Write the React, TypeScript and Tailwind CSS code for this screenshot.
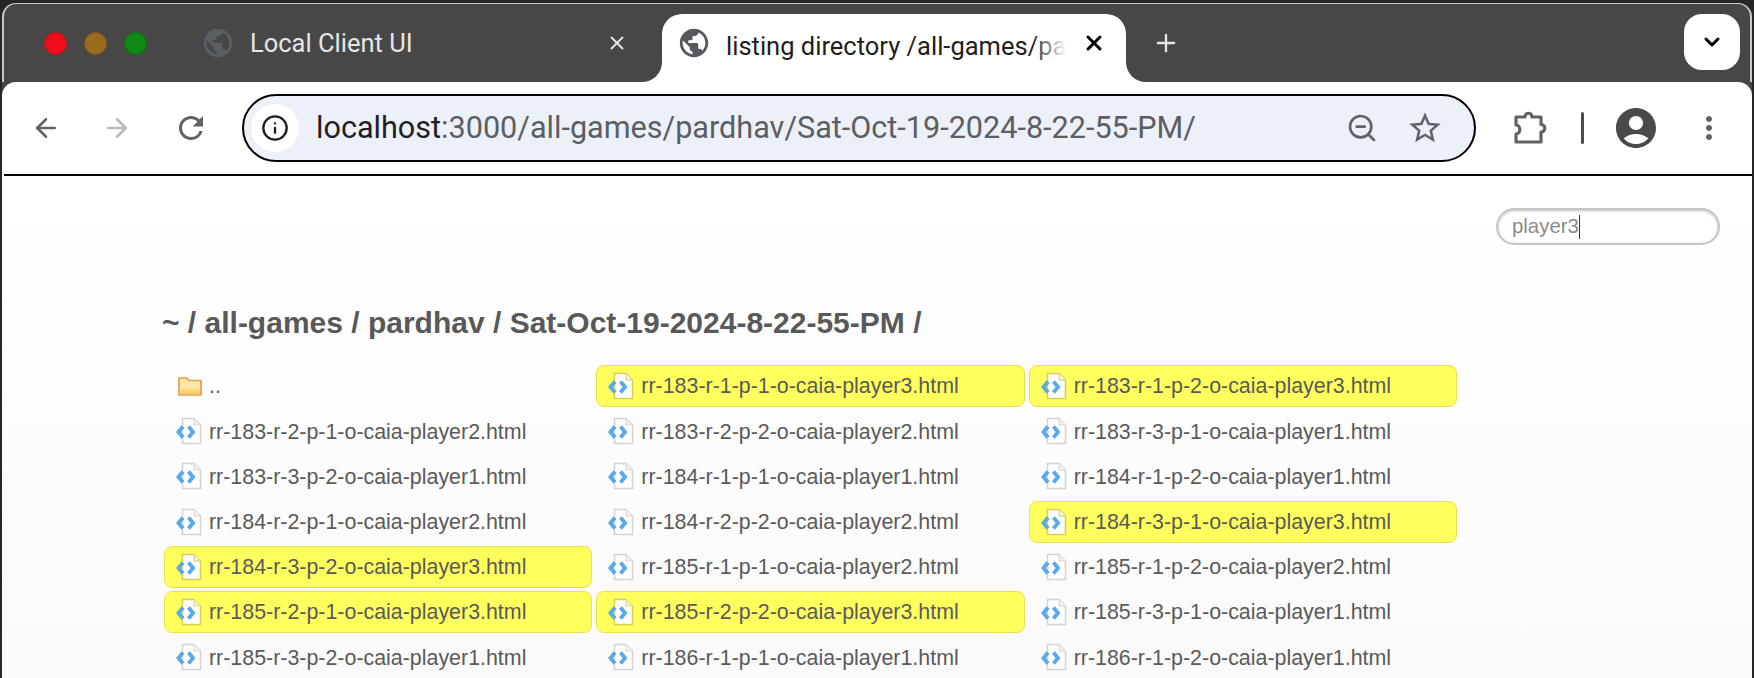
import React from "react";
import { ArrowLeft, ArrowRight, Info, ZoomOut, X, Plus, ChevronDown } from "lucide-react";
import { MdPublic, MdAccountCircle, MdMoreVert, MdRefresh, MdStarBorder } from "react-icons/md";

const files: [string, boolean][] = [
  ["..", false],
  ["rr-183-r-1-p-1-o-caia-player3.html", true],
  ["rr-183-r-1-p-2-o-caia-player3.html", true],
  ["rr-183-r-2-p-1-o-caia-player2.html", false],
  ["rr-183-r-2-p-2-o-caia-player2.html", false],
  ["rr-183-r-3-p-1-o-caia-player1.html", false],
  ["rr-183-r-3-p-2-o-caia-player1.html", false],
  ["rr-184-r-1-p-1-o-caia-player1.html", false],
  ["rr-184-r-1-p-2-o-caia-player1.html", false],
  ["rr-184-r-2-p-1-o-caia-player2.html", false],
  ["rr-184-r-2-p-2-o-caia-player2.html", false],
  ["rr-184-r-3-p-1-o-caia-player3.html", true],
  ["rr-184-r-3-p-2-o-caia-player3.html", true],
  ["rr-185-r-1-p-1-o-caia-player2.html", false],
  ["rr-185-r-1-p-2-o-caia-player2.html", false],
  ["rr-185-r-2-p-1-o-caia-player3.html", true],
  ["rr-185-r-2-p-2-o-caia-player3.html", true],
  ["rr-185-r-3-p-1-o-caia-player1.html", false],
  ["rr-185-r-3-p-2-o-caia-player1.html", false],
  ["rr-186-r-1-p-1-o-caia-player1.html", false],
  ["rr-186-r-1-p-2-o-caia-player1.html", false],
];

function FileIcon({ hit }: { hit: boolean }) {
  const edge = hit ? "#d8cf5a" : "#d4d4d4";
  return (
    <svg width="28" height="28" viewBox="0 0 28 28" className="shrink-0">
      <path d="M6.5 1.5H18L24.5 8V26.5H6.5Z" fill="#ffffff" stroke={edge} strokeWidth="1.6" />
      <path d="M18 1.5V8H24.5" fill="#f1f1f1" stroke={edge} strokeWidth="1" />
      <path d="M7 9.5L2.5 15L7 20.5" fill="none" stroke="#58a9ea" strokeWidth="3.8" />
      <path d="M12.5 9.5L17 15L12.5 20.5" fill="none" stroke="#58a9ea" strokeWidth="3.8" />
    </svg>
  );
}

function FolderIcon() {
  return (
    <svg width="28" height="28" viewBox="0 0 28 28" className="shrink-0">
      <defs>
        <linearGradient id="fold" x1="0" y1="0" x2="0" y2="1">
          <stop offset="0" stopColor="#fdeeb8" />
          <stop offset="1" stopColor="#f5c75a" />
        </linearGradient>
      </defs>
      <path d="M3 6H11L13 8.5H25V23H3Z" fill="#fbe6a6" stroke="#e3a050" strokeWidth="1.7" />
      <path d="M4.5 14H24V22H4.5Z" fill="url(#fold)" />
    </svg>
  );
}

function PuzzleIcon() {
  return (
    <svg width="38" height="38" viewBox="0 0 38 38" className="text-[#5f6368] ml-[34px] shrink-0" fill="none" stroke="currentColor" strokeWidth="3.2" strokeLinejoin="round">
      <path d="M6 8H15C15 3 22 3 22 8H31V15.5C36 15.5 36 23 31 23V33H6V25C11 25 11 16 6 16Z" />
    </svg>
  );
}

export default function App() {
  return (
    <div className="w-[1754px] h-[678px] overflow-hidden bg-[#262626] pt-[3px] px-[2px]" style={{ fontFamily: "Roboto, sans-serif" }}>
      <div className="h-full rounded-t-[14px] flex flex-col bg-[#474747]">
        {/* tab strip */}
        <div className="h-[79px] shrink-0 flex pt-[10px] relative border-t-[1px] border-x-[2px] border-[#c9c9c9] rounded-t-[14px]">
          <div className="flex items-center gap-[17px] pl-[40px] w-[192px] h-[58px]">
            <span className="w-[23px] h-[23px] rounded-full bg-[#f00d1b] border border-[#c3101b]" />
            <span className="w-[23px] h-[23px] rounded-full bg-[#9c6b1d] border border-[#7d5414]" />
            <span className="w-[23px] h-[23px] rounded-full bg-[#0d8a15] border border-[#0a6d10]" />
          </div>
          <div className="w-[466px] h-[58px] flex items-center text-[#e6e6e6] text-[25.5px]">
            <MdPublic size={34} className="text-[#5a5e66] ml-[5px] shrink-0" />
            <span className="ml-[15px] flex-1">Local Client UI</span>
            <X size={22} strokeWidth={2} className="mr-[34px] text-[#e8e8e8]" />
          </div>
          <div className="w-[464px] h-[68px] bg-white rounded-t-[20px] relative flex items-start pt-[12px] text-[#1f1f1f] text-[25.5px]">
            <div className="absolute left-[-20px] bottom-0 w-5 h-5 bg-white">
              <div className="w-full h-full bg-[#474747] rounded-br-[20px]" />
            </div>
            <div className="absolute right-[-20px] bottom-0 w-5 h-5 bg-white">
              <div className="w-full h-full bg-[#474747] rounded-bl-[20px]" />
            </div>
            <MdPublic size={34} className="text-[#55585e] ml-[15px] shrink-0" />
            <span className="ml-[15px] w-[340px] relative whitespace-nowrap pt-[1px]">
              listing directory /all-games/pa
              <span className="absolute right-0 top-0 bottom-0 w-[34px] bg-gradient-to-r from-transparent to-white" />
            </span>
            <X size={24} strokeWidth={3} className="ml-[16px] mt-[5px] text-black shrink-0" />
          </div>
          <div className="h-[58px] flex items-center ml-[26px]">
            <Plus size={28} strokeWidth={2} className="text-[#e6e6e6]" />
          </div>
          <div className="flex-1 flex justify-end pr-[10px]">
            <div className="w-[56px] h-[56px] bg-white rounded-[18px] flex items-center justify-center">
              <ChevronDown size={24} strokeWidth={3} className="text-black" />
            </div>
          </div>
        </div>
        {/* toolbar */}
        <div className="shrink-0 bg-white rounded-t-[14px] relative z-10">
          <div className="h-[92px] flex items-center">
            <ArrowLeft size={30} strokeWidth={2} className="text-[#5f6368] ml-[29px]" />
            <ArrowRight size={30} strokeWidth={2} className="text-[#b9babc] ml-[41px]" />
            <MdRefresh size={36} className="text-[#5f6368] ml-[41px]" />
            <div className="ml-[33px] w-[1234px] h-[68px] rounded-[34px] border-[2px] border-black bg-[#ecf0f9] flex items-center pl-[7px] pr-[30px]">
              <div className="w-[48px] h-[48px] rounded-full bg-white flex items-center justify-center shrink-0">
                <Info size={28} strokeWidth={2} className="text-[#1f1f1f]" />
              </div>
              <div className="ml-[17px] flex-1 text-[30.6px] text-[#5b5e62] whitespace-nowrap">
                <span className="text-[#1f1f1f]">localhost</span>:3000/all-games/pardhav/Sat-Oct-19-2024-8-22-55-PM/
              </div>
              <ZoomOut size={32} strokeWidth={2} className="text-[#5f6368] shrink-0 relative left-[2px]" />
              <MdStarBorder size={38} className="text-[#5f6368] ml-[30px] shrink-0" />
            </div>
            <PuzzleIcon />
            <div className="w-[3px] h-[32px] bg-[#4a4c50] rounded ml-[33px]" />
            <MdAccountCircle size={48} className="text-[#4a4a4c] ml-[28px]" />
            <MdMoreVert size={36} className="text-[#5f6368] ml-[31px]" />
          </div>
          <div className="h-[2px] ml-[2px] bg-black" />
        </div>
        {/* page */}
        <div className="flex-1 min-h-0 bg-gradient-to-b from-white to-[#fafafa] relative overflow-hidden" style={{ fontFamily: "'Liberation Sans', Arial, sans-serif" }}>
          <div className="flex justify-end pt-[32px] pr-[32px]">
            <div className="w-[224px] h-[37px] rounded-[19px] border-[2px] border-[#c4c4c4] bg-white shadow-[inset_0_1px_3px_rgba(0,0,0,0.25)] flex items-center pl-[14px] text-[20.4px] text-[#8a8a8a]">
              player3<span className="w-px h-[24px] bg-[#333]" />
            </div>
          </div>
          <h1 className="ml-[160px] mt-[60px] text-[30px] leading-[36px] font-bold text-[#595959] whitespace-nowrap">
            ~ / all-games / pardhav / Sat-Oct-19-2024-8-22-55-PM /
          </h1>
          <div className="ml-[162px] mt-[24px] w-[1293px] grid grid-cols-3 gap-x-[4px] gap-y-[3.2px]">
            {files.map(([name, hit]) => (
              <div
                key={name}
                className={`h-[42px] rounded-[8px] border flex items-center pl-[11px] text-[21.4px] text-[#5a5a5a] whitespace-nowrap ${hit ? "bg-[#ffff5e] border-[#e8e14f]" : "border-transparent"}`}
              >
                {name === ".." ? <FolderIcon /> : <FileIcon hit={hit} />}
                <span className="ml-[5px] pt-[1px]">{name}</span>
              </div>
            ))}
          </div>
        </div>
      </div>
    </div>
  );
}
